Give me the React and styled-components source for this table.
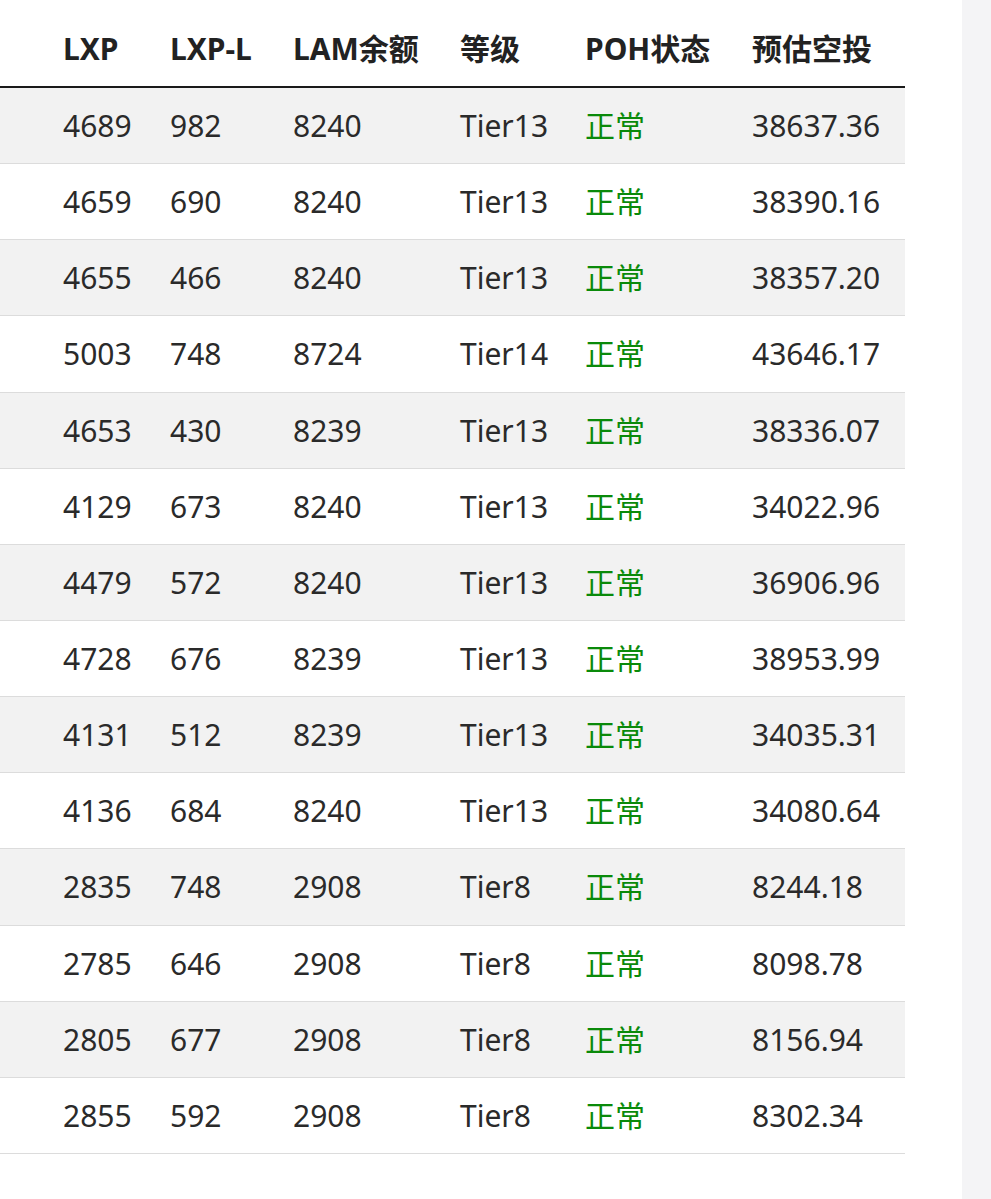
import React from 'react';
import styled, { createGlobalStyle } from 'styled-components';

const GlobalStyle = createGlobalStyle`
  html, body {
    margin: 0;
    padding: 0;
    background: #ffffff;
  }
  body {
    font-family: "Noto Sans", "Noto Sans CJK SC", sans-serif;
    color: #222;
  }
`;

const Page = styled.div`
  display: flex;
  width: 991px;
  min-height: 1199px;
`;

const Main = styled.div`
  width: 962px;
  background: #fff;
`;

const Gutter = styled.div`
  flex: 1;
  background: #f4f4f6;
`;

const Table = styled.table`
  width: 905px;
  border-collapse: collapse;
  table-layout: fixed;
  font-size: 30px;
`;

const Th = styled.th`
  text-align: left;
  font-weight: 700;
  color: #222;
  line-height: 45px;
  padding: 26px 0 15px;
  border-bottom: 2px solid #1a1a1a;
  white-space: nowrap;
`;

const Row = styled.tr`
  background: ${({ $striped }) => ($striped ? '#f2f2f2' : '#fff')};
  border-bottom: 1px solid #dcdcdc;
`;

const Td = styled.td`
  line-height: 45.14px;
  padding: 15px 0;
  color: ${({ $ok }) => ($ok ? '#0a8a0a' : '#2a2a2a')};
  white-space: nowrap;
`;

const columns = [
  { key: 'pad', label: '', width: 63 },
  { key: 'lxp', label: 'LXP', width: 107 },
  { key: 'lxpl', label: 'LXP-L', width: 123 },
  { key: 'lam', label: 'LAM余额', width: 167 },
  { key: 'tier', label: '等级', width: 125 },
  { key: 'poh', label: 'POH状态', width: 167 },
  { key: 'drop', label: '预估空投', width: 153 },
];

const rows = [
  ['4689', '982', '8240', 'Tier13', '38637.36'],
  ['4659', '690', '8240', 'Tier13', '38390.16'],
  ['4655', '466', '8240', 'Tier13', '38357.20'],
  ['5003', '748', '8724', 'Tier14', '43646.17'],
  ['4653', '430', '8239', 'Tier13', '38336.07'],
  ['4129', '673', '8240', 'Tier13', '34022.96'],
  ['4479', '572', '8240', 'Tier13', '36906.96'],
  ['4728', '676', '8239', 'Tier13', '38953.99'],
  ['4131', '512', '8239', 'Tier13', '34035.31'],
  ['4136', '684', '8240', 'Tier13', '34080.64'],
  ['2835', '748', '2908', 'Tier8', '8244.18'],
  ['2785', '646', '2908', 'Tier8', '8098.78'],
  ['2805', '677', '2908', 'Tier8', '8156.94'],
  ['2855', '592', '2908', 'Tier8', '8302.34'],
];

export default function App() {
  return (
    <>
      <GlobalStyle />
      <Page>
        <Main>
          <Table>
            <colgroup>
              {columns.map((c) => (
                <col key={c.key} style={{ width: c.width }} />
              ))}
            </colgroup>
            <thead>
              <tr>
                {columns.map((c) => (
                  <Th key={c.key}>{c.label}</Th>
                ))}
              </tr>
            </thead>
            <tbody>
              {rows.map((r, i) => (
                <Row key={i} $striped={i % 2 === 0}>
                  <Td />
                  <Td>{r[0]}</Td>
                  <Td>{r[1]}</Td>
                  <Td>{r[2]}</Td>
                  <Td>{r[3]}</Td>
                  <Td $ok>正常</Td>
                  <Td>{r[4]}</Td>
                </Row>
              ))}
            </tbody>
          </Table>
        </Main>
        <Gutter />
      </Page>
    </>
  );
}
